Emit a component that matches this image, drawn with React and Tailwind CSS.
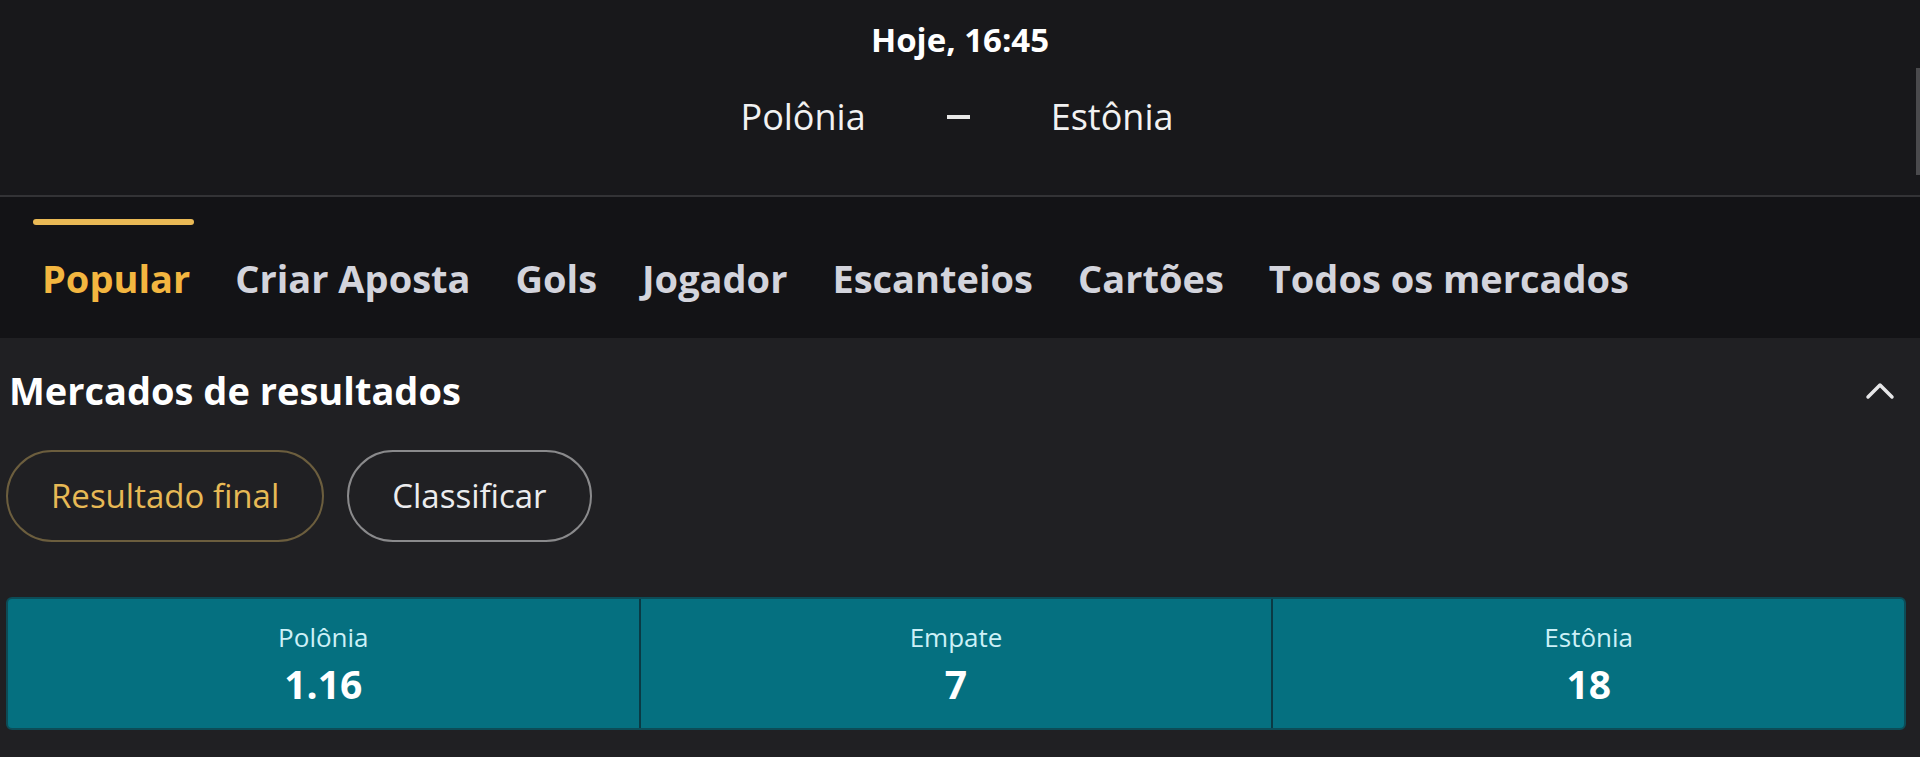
import React, { useState } from "react";

const tabs = [
  "Popular",
  "Criar Aposta",
  "Gols",
  "Jogador",
  "Escanteios",
  "Cartões",
  "Todos os mercados",
];

const odds = [
  { label: "Polônia", value: "1.16" },
  { label: "Empate", value: "7" },
  { label: "Estônia", value: "18" },
];

const ChevronUp = () => (
  <svg width="30" height="20" viewBox="0 0 30 20" fill="none">
    <polyline
      points="3,17 15,5 27,17"
      stroke="#e6e6e8"
      strokeWidth="3.5"
      strokeLinecap="round"
      strokeLinejoin="round"
    />
  </svg>
);

const App = () => {
  const [activeTab, setActiveTab] = useState(0);
  const [activeFilter, setActiveFilter] = useState(0);

  return (
    <div className="w-full min-h-[757px] bg-[#202023] font-['Open_Sans',sans-serif]">
      {/* Match header */}
      <div className="relative h-[197px] bg-[#18181b] flex flex-col items-center pt-[17px] border-b-2 border-[#333336]">
        <div className="text-[33px] leading-[45px] font-bold text-white">Hoje, 16:45</div>
        <div className="mt-[32px] -ml-[6px] flex items-center text-[36px] leading-[46px] text-[#f2f2f2]">
          <span>Polônia</span>
          <span className="mx-[81px] w-[23px] h-[4px] bg-[#e8e8e8]" />
          <span>Estônia</span>
        </div>
        <div className="absolute right-0 top-[68px] w-[4px] h-[107px] bg-[#4a4a4d]" />
      </div>

      {/* Tabs */}
      <div className="h-[141px] bg-[#131316] flex items-start pl-[42px] gap-[45px]">
        {tabs.map((tab, idx) => {
          const active = idx === activeTab;
          return (
            <button
              key={tab}
              onClick={() => setActiveTab(idx)}
              className="flex flex-col items-start pt-[22px] cursor-pointer"
            >
              <span
                className={`self-stretch -ml-[9px] -mr-[4px] h-[6px] rounded-sm ${active ? "bg-[#e9b955]" : "bg-transparent"}`}
              />
              <span
                className={`mt-[27px] text-[38px] leading-[52px] font-bold whitespace-nowrap ${active ? "text-[#f3b640]" : "text-[#d3d4dc]"}`}
              >
                {tab}
              </span>
            </button>
          );
        })}
      </div>

      {/* Result markets */}
      <div className="pt-[26px]">
        <div className="flex items-center justify-between pl-[9px] pr-[25px]">
          <h2 className="text-[38px] leading-[52px] font-bold text-white">Mercados de resultados</h2>
          <ChevronUp />
        </div>

        <div className="mt-[34px] flex gap-[23px] pl-[6px]">
          {["Resultado final", "Classificar"].map((label, idx) => {
            const active = idx === activeFilter;
            return (
              <button
                key={label}
                onClick={() => setActiveFilter(idx)}
                className={`h-[92px] px-[43px] rounded-full border-2 text-[33px] cursor-pointer ${active ? "border-[#6c5e3e] text-[#e7b955]" : "border-[#8a8a8c] text-[#ececee]"}`}
              >
                {label}
              </button>
            );
          })}
        </div>

        <div className="mt-[55px] ml-[6px] mr-[14px] h-[133px] flex rounded-[6px] border-2 border-[#0c4c57] bg-[#057080] overflow-hidden">
          {odds.map((o, idx) => (
            <div
              key={o.label}
              className={`flex-1 flex flex-col items-center pt-[21px] ${idx > 0 ? "border-l-2 border-[#0a3a44]" : ""}`}
            >
              <span className="text-[26px] leading-[34px] text-[#cdf0f7]">{o.label}</span>
              <span className="mt-[6px] text-[39px] leading-[48px] font-bold text-white">{o.value}</span>
            </div>
          ))}
        </div>
      </div>
    </div>
  );
};

export default App;
